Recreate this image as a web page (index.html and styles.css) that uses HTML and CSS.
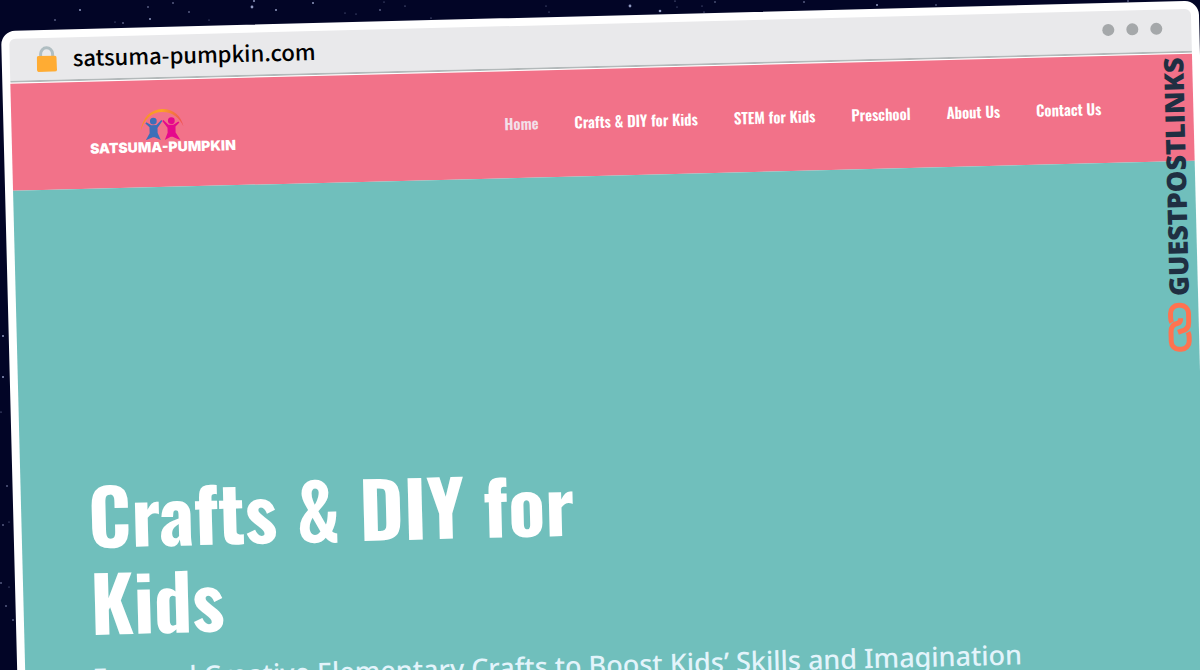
FILE: index.html
```html
<!DOCTYPE html>
<html lang="en">
<head>
<meta charset="utf-8">
<meta name="viewport" content="width=device-width, initial-scale=1">
<title>satsuma-pumpkin.com</title>
<link rel="stylesheet" href="styles.css">
</head>
<body>
<svg class="sky" aria-hidden="true">
  <g fill="#8f98bf">
    <circle cx="80" cy="10" r="1"/><circle cx="55" cy="20" r=".8"/><circle cx="123" cy="23" r=".8"/>
    <circle cx="115" cy="22" r=".5"/><circle cx="150" cy="19" r="1"/><circle cx="148" cy="7" r=".8"/>
    <circle cx="173" cy="3" r=".8"/><circle cx="189" cy="12" r=".8"/><circle cx="252" cy="7" r="1.4"/>
    <circle cx="254" cy="1" r="1"/><circle cx="276" cy="10" r="1"/><circle cx="313" cy="3" r="1"/>
    <circle cx="345" cy="13" r=".5"/><circle cx="356" cy="14" r=".5"/><circle cx="380" cy="10" r=".8"/>
    <circle cx="384" cy="2" r=".5"/><circle cx="209" cy="20" r=".5"/><circle cx="405" cy="6" r=".6"/>
    <circle cx="431" cy="18" r=".6"/><circle cx="546" cy="6" r=".5"/><circle cx="549" cy="12" r=".5"/>
    <circle cx="630" cy="6" r="1.4"/><circle cx="660" cy="11" r="1.3"/><circle cx="675" cy="1" r=".6"/>
    <circle cx="677" cy="7" r=".5"/><circle cx="702" cy="6" r=".5"/><circle cx="704" cy="12" r=".6"/>
    <circle cx="715" cy="2" r=".7"/><circle cx="804" cy="2" r=".8"/>
    <circle cx="877" cy="5" r="1"/><circle cx="936" cy="5" r=".7"/><circle cx="1128" cy="1" r=".8"/>
    <circle cx="3" cy="336" r="1"/><circle cx="3" cy="377" r="1"/><circle cx="1" cy="412" r=".6"/>
    <circle cx="7" cy="486" r=".8"/><circle cx="3" cy="525" r=".8"/><circle cx="9" cy="522" r=".5"/>
    <circle cx="1" cy="583" r=".8"/><circle cx="9" cy="587" r=".5"/><circle cx="6" cy="606" r=".8"/>
    <circle cx="13" cy="620" r=".8"/>
  </g>
</svg>
<div class="window">
  <header class="titlebar">
    <svg class="lock" viewBox="0 0 20 26" aria-hidden="true">
      <path d="M4 12V8a6 6 0 0 1 12 0v4" fill="none" stroke="#b0bec2" stroke-width="3"/>
      <rect y="10" width="20" height="16" rx="2" fill="#ffac33"/>
    </svg>
    <span class="address">satsuma-pumpkin.com</span>
    <span class="dots"><i class="dot"></i><i class="dot"></i><i class="dot"></i></span>
  </header>
  <div class="site-header">
    <a class="logo" href="#">
      <svg class="logo-mark" viewBox="0 0 44 31" aria-hidden="true">
        <defs><linearGradient id="arc"><stop offset="0" stop-color="#f58a2c"/><stop offset=".5" stop-color="#fba524"/><stop offset="1" stop-color="#ef4f57"/></linearGradient></defs>
        <path d="M0 22C2 8 11 0 22 0s19 7 21 18C39 9 32 3 22 3S4 9 0 22z" fill="url(#arc)"/>
        <circle cx="13" cy="12" r="3.4" fill="#3c6fb8"/>
        <path d="M6 13l5 3h5l5-5 1 1-5 7v5l3 7-6-3h-2l-7 3 4-7v-6l-4-4z" fill="#3c6fb8"/>
        <circle cx="31" cy="12" r="3.4" fill="#e5098c"/>
        <path d="M38 13l-5 3h-5l-5-5-1 1 5 7v5l-3 7 6-3h2l8 4-5-8v-6l4-4z" fill="#e5098c"/>
      </svg>
      <span class="logo-text">SATSUMA-PUMPKIN</span>
    </a>
    <nav class="menu">
      <a class="menu-link current" href="#">Home</a>
      <a class="menu-link" href="#">Crafts &amp; DIY for Kids</a>
      <a class="menu-link" href="#">STEM for Kids</a>
      <a class="menu-link" href="#">Preschool</a>
      <a class="menu-link" href="#">About Us</a>
      <a class="menu-link" href="#">Contact Us</a>
    </nav>
  </div>
  <main class="hero">
    <h1 class="hero-title">Crafts &amp; DIY for<br>Kids</h1>
    <p class="hero-text">Fun and Creative Elementary Crafts to Boost Kids’ Skills and Imagination</p>
  </main>
  <aside class="badge">
    <span class="badge-text">GUESTPOSTLINKS</span>
    <svg class="badge-icon" viewBox="0 0 24 50" aria-hidden="true">
      <g fill="none" stroke="#ff7350" stroke-width="5">
        <path d="M4 20Q3 18 3 15v-4a8 8 0 0 1 8-8h2a8 8 0 0 1 8 8v9q0 8-8 9l-3 1"/>
        <path d="M20 30q1 2 1 5v4a8 8 0 0 1-8 8h-2a8 8 0 0 1-8-8v-9q0-8 7-9 3-1 3-5"/>
      </g>
    </svg>
  </aside>
</div>
</body>
</html>
```
FILE: styles.css
```css
* { box-sizing: border-box; }
body {
  margin: 0;
  height: 100vh;
  padding: 31px 1px 0;
  overflow: hidden;
  background: #020526;
  font-family: "Noto Sans", sans-serif;
}
.sky { position: absolute; top: 0; left: 0; width: 100%; height: 100%; }
.window {
  position: relative;
  border: 8px solid #fff;
  border-radius: 14px;
  background: #fff;
  transform: rotate(-1.45deg);
  transform-origin: top left;
}
.titlebar {
  display: flex;
  align-items: center;
  height: 44px;
  margin-bottom: 1px;
  padding: 0 29px 0 27px;
  border-bottom: 2px solid #b3b9ba;
  border-radius: 6px 6px 0 0;
  background: #e9e9eb;
}
.lock { width: 20px; height: 26px; }
.address {
  margin-left: 16px;
  padding-bottom: 4px;
  color: #000;
  font: 500 22px/32px "Noto Sans CJK SC", sans-serif;
}
.dots { display: flex; gap: 12px; margin-left: auto; padding-bottom: 4px; }
.dot { width: 12px; height: 12px; border-radius: 50%; background: #a5a8aa; }
.site-header {
  display: flex;
  align-items: center;
  justify-content: space-between;
  height: 107px;
  padding: 0 92px 4px 78px;
  background: #f27289;
}
.logo { display: flex; flex-direction: column; align-items: center; color: #fff; text-decoration: none; }
.logo-mark { width: 44px; height: 31px; }
.logo-text { font: 900 14px/14px Inter, sans-serif; }
.menu { display: flex; gap: 36px; }
.menu-link {
  color: #fff;
  font: 600 15px/24px Oswald, "Liberation Sans Narrow", sans-serif;
  text-decoration: none;
}
.current { color: #f3dfe8; }
.hero { min-height: 500px; padding: 281px 70px 20px 67px; background: #70bfbc; }
.hero-title {
  margin: 0;
  color: #fff;
  font: 700 76px/87px Oswald, "Liberation Sans Narrow", sans-serif;
}
.hero-text { margin: 16px 0 0; color: #e3f4fb; font-size: 27px; line-height: 36px; font-weight: 500; }
.badge {
  position: absolute;
  top: 48px;
  right: 5px;
  display: flex;
  flex-direction: column;
  align-items: center;
  gap: 6px;
}
.badge-text {
  color: #1f2f42;
  font: 800 27px/28px "Open Sans", sans-serif;
  writing-mode: vertical-rl;
  transform: rotate(180deg);
}
.badge-icon { width: 24px; height: 50px; }
```
